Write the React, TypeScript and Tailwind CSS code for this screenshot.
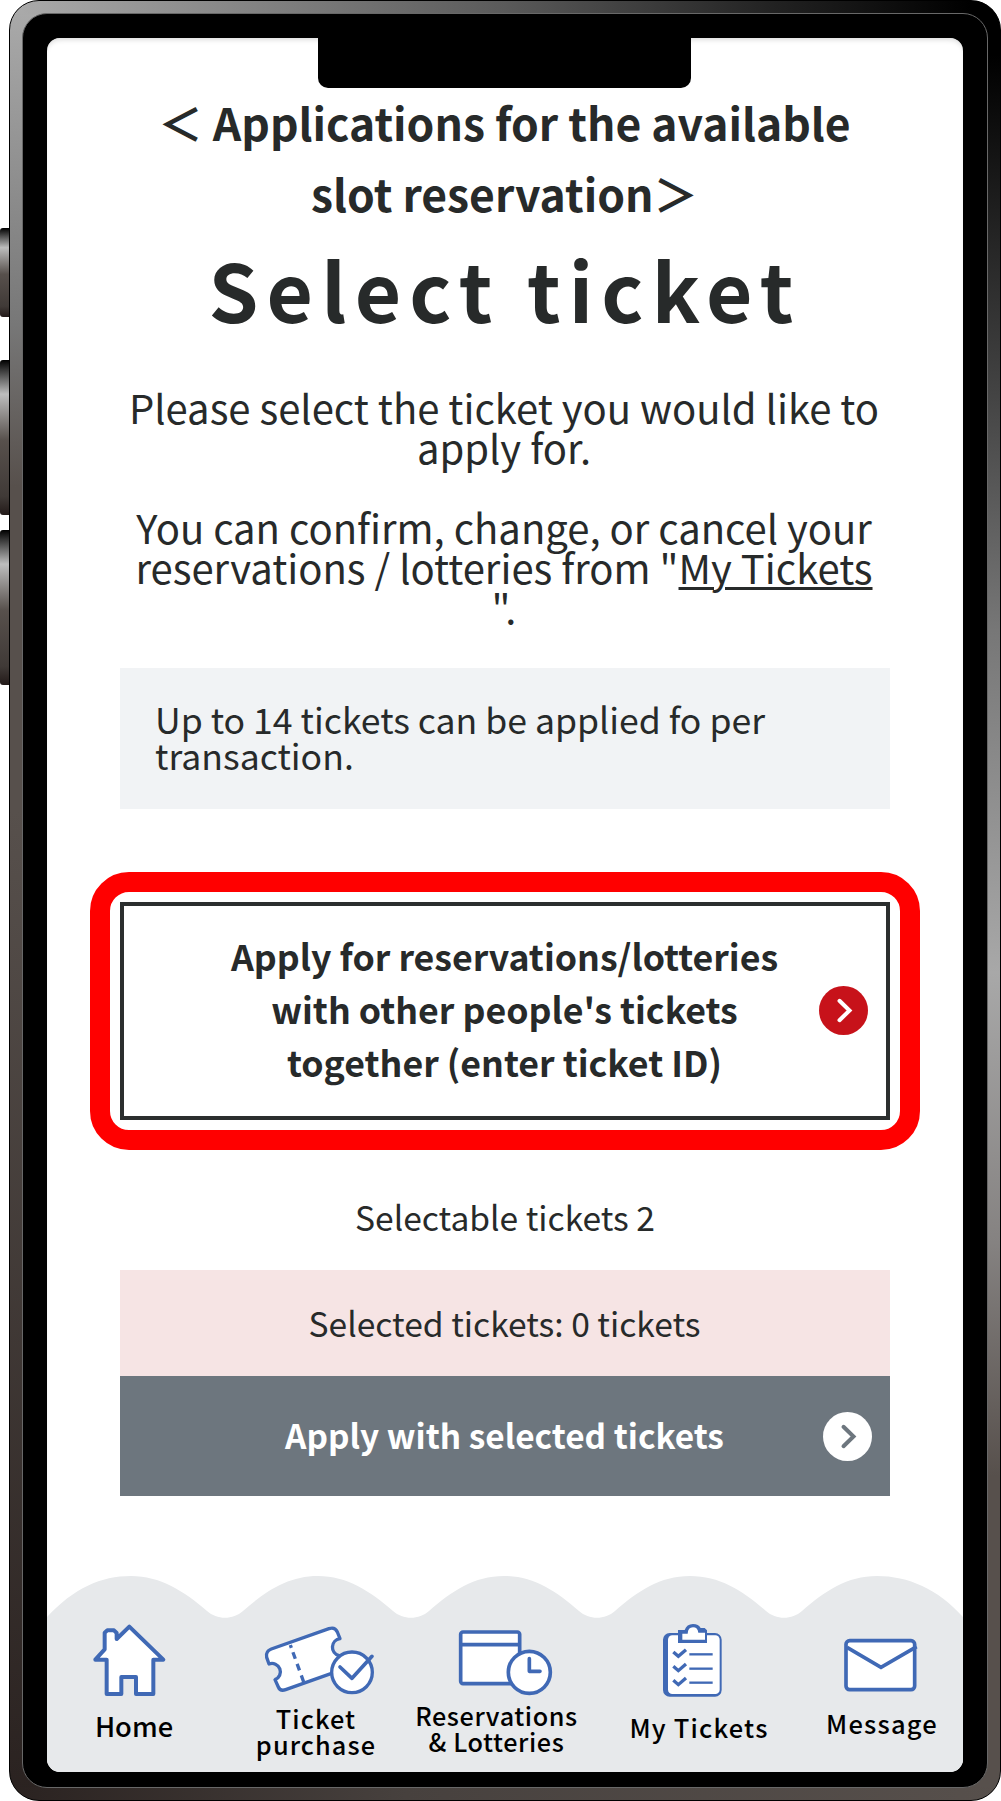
import React from "react";

const BLUE = "#4069b5";

function HomeIcon() {
  return (
    <svg viewBox="270 180 240 240" className="mr-[10px] h-20 w-20" fill="#fff" stroke={BLUE} strokeWidth="12" strokeLinejoin="round">
      <path d="M388 200 490 299H460V402H408V351H364V402H320V299H286L314 268V218L322 211H342L350 219V237Z" />
    </svg>
  );
}

function TicketIcon() {
  return (
    <svg viewBox="790 180 339 240" className="ml-[7px] h-20 w-[113px]" fill="#fff" stroke={BLUE} strokeWidth="10" strokeLinejoin="round">
      <path d="M815 267 988 206Q1006 200 1013 216L1021 236A26 26 0 0 0 1018 287L1036 326 858 389Q842 395 836 381L826 359A25 25 0 1 0 808 312L801 292Q797 274 815 267Z" />
      <path d="M872 255 912 366" strokeDasharray="9 14 21 16 21 16 22" />
      <circle cx="1057" cy="337" r="61" />
      <path d="M1021 321 1057 355 1117 289" fill="none" strokeLinecap="round" strokeWidth="11" />
    </svg>
  );
}

function CalendarIcon() {
  return (
    <svg viewBox="230 180 300 240" className="ml-[19px] h-20 w-[100px]" fill="#fff" stroke={BLUE} strokeWidth="11">
      <rect x="244" y="216" width="177" height="155" rx="7" />
      <path d="M244 254H421" />
      <circle cx="450" cy="337" r="63" />
      <path d="M450 296V334H482" fill="none" strokeLinecap="round" strokeLinejoin="round" />
    </svg>
  );
}

function ChecklistIcon() {
  return (
    <svg viewBox="120 180 195 240" className="mr-[13px] h-20 w-[65px]" fill="none" stroke={BLUE} strokeWidth="10">
      <rect x="129" y="219" width="176" height="191" rx="20" fill={BLUE} stroke="none" />
      <rect x="144" y="226" width="155" height="176" rx="13" fill="#fff" stroke="none" />
      <path d="M174 210H194Q200 192 219 192 236 192 242 204H254L261 211V249H174Z" fill={BLUE} stroke="none" />
      <path d="M187 221H203Q204 202 219 202 233 202 235 218H255V239H187Z" fill="#fff" stroke="none" />
      {[280, 323, 365].map((y) => (
        <g key={y} transform={`translate(0 ${y})`}>
          <path d="M160 -4 175 9 198 -11" />
          <path d="M208 3H278" strokeWidth="7" />
        </g>
      ))}
    </svg>
  );
}

function MailIcon() {
  return (
    <svg viewBox="665 180 231 240" className="mr-[4px] h-20 w-[77px]" fill="#fff" stroke={BLUE} strokeWidth="11">
      <rect x="677" y="242" width="206" height="147" rx="11" />
      <path d="M680 262 782 322 889 260" fill="none" />
    </svg>
  );
}

function Arrow({ className }: { className: string }) {
  return (
    <svg viewBox="0 0 49 49" className={`absolute h-[49px] w-[49px] ${className}`}>
      <circle cx="24.5" cy="24.5" r="24.5" fill="currentColor" />
      <path d="M20.5 14.8 30.5 24.5 20.5 34.2" fill="none" stroke="var(--chevron)" strokeWidth="4" strokeLinecap="round" strokeLinejoin="miter" />
    </svg>
  );
}

function SideButton({ className }: { className: string }) {
  return (
    <div
      className={`w-[9px] rounded-l-[3px] bg-[linear-gradient(180deg,#000_0%,#bdbdbd_22%,#57504c_52%,#403a37_88%,#231a19_100%)] ${className}`}
    />
  );
}

export default function App() {
  return (
    <div className="flex h-[1801px] w-[1001px] overflow-hidden bg-white font-['Noto_Sans_CJK_JP','Noto_Sans',sans-serif] text-[#272a2a]">
      {/* volume / silent keys */}
      <div className="w-[9px] shrink-0 pt-[228px]">
        <SideButton className="h-[89px]" />
        <SideButton className="mt-[43px] h-[155px]" />
        <SideButton className="mt-[15px] h-[155px]" />
      </div>

      {/* metal frame */}
      <div className="w-[992px] shrink-0 rounded-[30px] border border-black p-3 [background:linear-gradient(90deg,#ababab_0%,#5a5a5a_50%,#222_77%,#000_97%)_top/100%_13px_no-repeat,linear-gradient(90deg,#2a2220_0%,#47413e_40%,#57504c_100%)_bottom/100%_13px_no-repeat,linear-gradient(180deg,#ababab_0%,#777_18%,#57504c_27%,#57504c_45%,#2a2220_100%)_left/50%_100%_no-repeat,linear-gradient(180deg,#000_3%,#444_22%,#777_35%,#a8a8a8_54%,#858281_69%,#57504c_82%,#57504c_100%)_right/50%_100%_no-repeat]">
        <div className="h-full rounded-[25px] border border-[#686868] bg-black px-[24px] pb-[15px] pt-[24px]">
          <div className="relative flex h-full flex-col overflow-hidden rounded-[13px] bg-white shadow-[inset_0_4px_5px_-2px_#ddd]">
            <div className="absolute left-[271px] top-0 h-[49.5px] w-[373px] rounded-b-[10px] bg-black" />

            <main className="whitespace-nowrap px-[73px] pt-[48px] text-center">
              <h2 className="pr-[1px] text-[44.45px] font-bold leading-[71px]">
                ＜ Applications for the available
                <br />
                slot reservation＞
              </h2>
              <h1 className="mt-[20px] text-[80px] font-bold leading-[80px] tracking-[8.2px]">Select ticket</h1>
              <p className="mt-[59px] pr-[2px] text-[40px] leading-[40px]">
                Please select the ticket you would like to
                <br />
                apply for.
              </p>
              <p className="mt-[40px] pr-[2px] text-[40px] leading-[40px]">
                You can confirm, change, or cancel your
                <br />
                reservations / lotteries from "
                <a className="underline decoration-[3px] underline-offset-[3px]">My Tickets</a>
                <br />
                ".
              </p>

              <p className="mt-[41px] h-[141px] bg-[#f1f3f5] pl-[35px] pt-[33px] text-left text-[35.6px] leading-[35.5px]">
                Up to 14 tickets can be applied fo per
                <br />
                transaction.
              </p>

              <div className="-mx-[30px] mt-[63px] h-[278px] rounded-[39px] border-[20px] border-[#ff0000] p-[10px]">
                <button className="relative flex h-[218px] w-full items-center justify-center border-4 border-[#2b2e2e] pb-[6px] pr-[1px] text-[35.7px] font-bold leading-[53px]">
                  <span>
                    Apply for reservations/lotteries
                    <br />
                    with other people's tickets
                    <br />
                    together (enter ticket ID)
                  </span>
                  <Arrow className="right-[18px] top-[80px] text-[#c7121a] [--chevron:#fff]" />
                </button>
              </div>

              <p className="mt-[49px] text-[33.6px] leading-[36px]">Selectable tickets 2</p>
              <p className="mt-[35px] flex h-[106px] items-center justify-center bg-[#f6e4e4] pr-[1px] text-[33.6px]">
                Selected tickets: 0 tickets
              </p>
              <button className="relative flex h-[120px] w-full items-center justify-center bg-[#6d767e] pb-[1px] pr-[1px] text-[33.4px] font-bold text-white">
                Apply with selected tickets
                <Arrow className="right-[18px] top-[36px] text-white [--chevron:#6d767e]" />
              </button>
            </main>

            {/* bottom tabs on a scalloped strip */}
            <nav className="relative mt-auto h-[196px] whitespace-nowrap pt-[44px] text-center font-medium text-black">
              <svg viewBox="47 1576 916 196" preserveAspectRatio="none" className="absolute inset-0 h-full w-full" fill="#e7e9eb">
                <path d="M47 1617C74 1588 101 1576 131 1576C160 1576 184 1591 207 1611C217 1620 233 1620 243 1611C266 1591 288 1576 318 1576C347 1576 370 1591 393 1611C403 1620 419 1620 429 1611C452 1591 474 1576 504 1576C533 1576 556 1591 579 1611C589 1620 605 1620 615 1611C638 1591 660 1576 690 1576C720 1576 743 1591 766 1611C776 1620 792 1620 802 1611C825 1591 847 1576 877 1576C908 1576 938 1589 963 1617V1772H47Z" />
              </svg>
              <div className="relative flex leading-[26px]">
                <div className="flex w-[175px] flex-col items-center">
                  <HomeIcon />
                  <span className="mt-[12px] pr-[1px] text-[27.3px]">Home</span>
                </div>
                <div className="flex w-[188px] flex-col items-center">
                  <TicketIcon />
                  <span className="mt-[5px] text-[25.3px] tracking-[1.1px]">
                    Ticket
                    <br />
                    purchase
                  </span>
                </div>
                <div className="flex w-[173px] flex-col items-center">
                  <CalendarIcon />
                  <span className="mt-[2px] text-[25.2px] tracking-[0.6px]">
                    Reservations
                    <br />
                    &amp; Lotteries
                  </span>
                </div>
                <div className="flex w-[232px] flex-col items-center">
                  <ChecklistIcon />
                  <span className="mt-[14px] text-[25.5px] tracking-[1.2px]">My Tickets</span>
                </div>
                <div className="flex w-[134px] flex-col items-center">
                  <MailIcon />
                  <span className="mt-[10px] text-[25.5px] tracking-[1.2px]">Message</span>
                </div>
              </div>
            </nav>
          </div>
        </div>
      </div>
    </div>
  );
}
